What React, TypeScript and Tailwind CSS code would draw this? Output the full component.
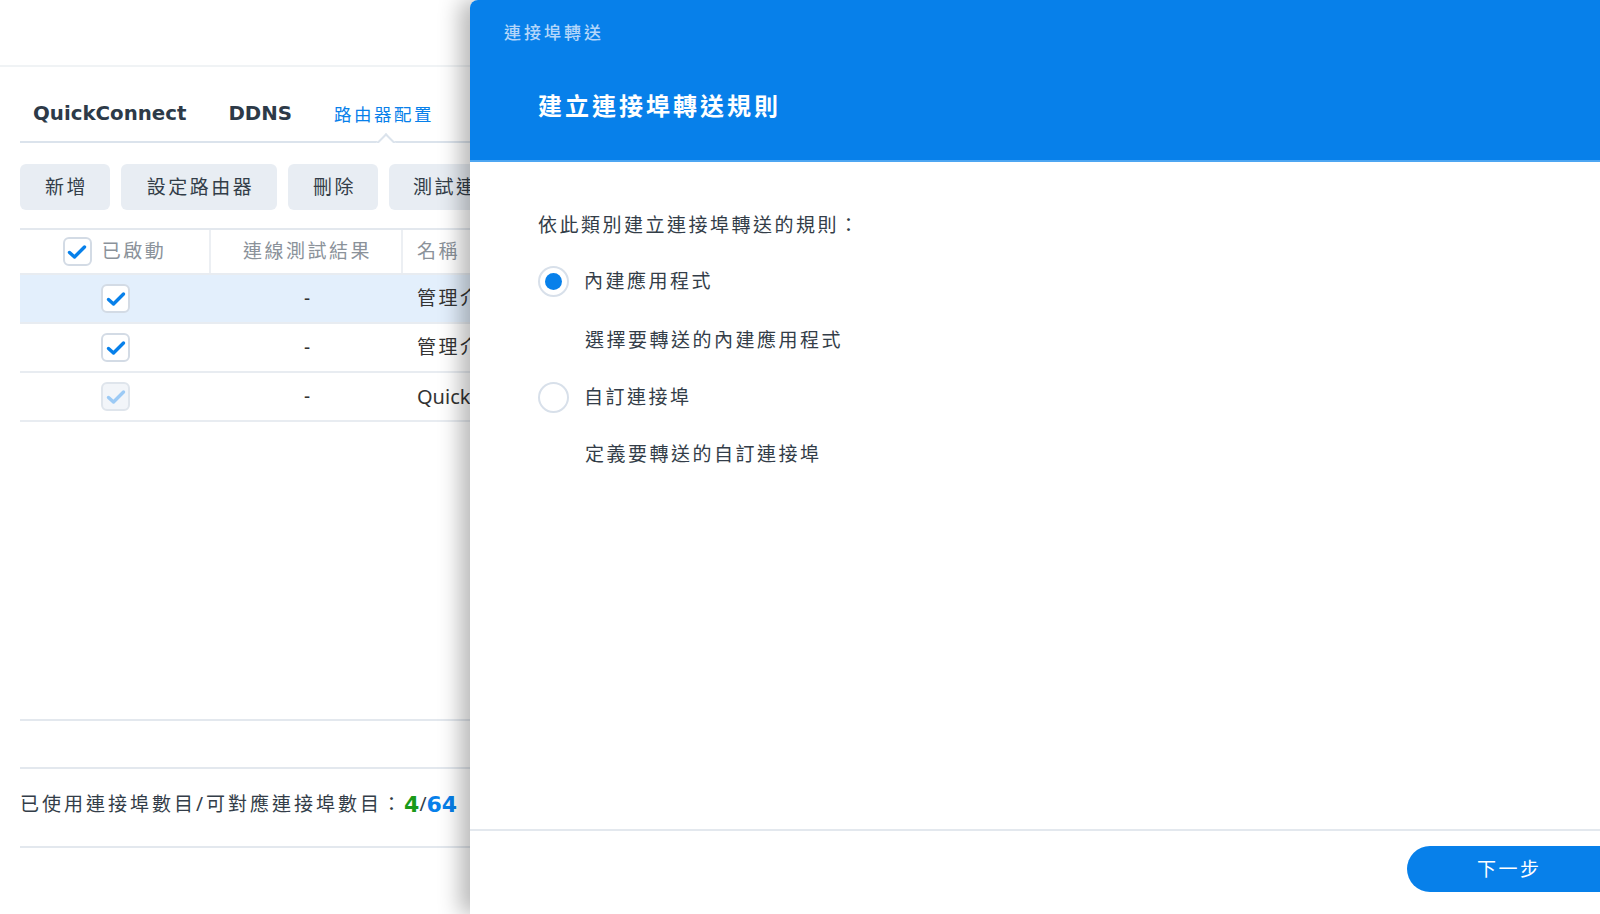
import React from "react";

const font = { fontFamily: '"Noto Sans", "Noto Sans CJK TC", sans-serif' };
const dv = { fontFamily: '"DejaVu Sans", "Noto Sans CJK TC", sans-serif' };

function Check({ faded = false }: { faded?: boolean }) {
  return (
    <div
      className={`flex h-[29px] w-[29px] shrink-0 items-center justify-center rounded-[6px] border-2 ${
        faded ? "border-[#dfe5ec] bg-[#f2f5f9]" : "border-[#d3dbe5] bg-white"
      }`}
    >
      <svg width="20" height="16" viewBox="0 0 20 16" fill="none">
        <path
          d="M2.5 8.5 L7.5 13 L17.5 3"
          stroke={faded ? "#9ccaf5" : "#0780ea"}
          strokeWidth="3.4"
          strokeLinecap="round"
          strokeLinejoin="round"
        />
      </svg>
    </div>
  );
}

function Row({ name, latin = false, faded = false, active = false }: { name: string; latin?: boolean; faded?: boolean; active?: boolean }) {
  return (
    <div className={`flex h-[49px] items-center border-b-2 border-[#e8ecf1] ${active ? "bg-[#e3effc]" : ""}`}>
      <div className="flex w-[191px] shrink-0 justify-center">
        <Check faded={faded} />
      </div>
      <div className="flex w-[192px] shrink-0 justify-center text-[19px] text-[#333]">-</div>
      <div className={`shrink-0 whitespace-nowrap pl-[14px] text-[#333] ${latin ? "text-[20px]" : "text-[19px] tracking-[2.5px]"}`}>{name}</div>
    </div>
  );
}

function Radio({ checked }: { checked: boolean }) {
  return (
    <div className="flex h-[31px] w-[31px] shrink-0 items-center justify-center rounded-full border-2 border-[#d8e0ea] bg-white">
      {checked && <div className="h-[17px] w-[17px] rounded-full bg-[#0780ea]" />}
    </div>
  );
}

export default function App() {
  return (
    <div className="relative h-[914px] w-[1600px] overflow-hidden bg-white" style={font}>
      {/* Left background page */}
      <div className="h-[67px] border-b-2 border-[#f0f3f5]" />
      <div className="w-[470px] pl-[20px]">
        <div className="relative flex h-[76px] items-center gap-[42px] border-b-2 border-[#dbe3ec] pl-[13px] pt-[20px]">
          <span className="text-[19.8px] font-bold text-[#2d3a48]" style={dv}>QuickConnect</span>
          <span className="text-[19.8px] font-bold text-[#2d3a48]" style={dv}>DDNS</span>
          <span className="text-[17.5px] tracking-[2.5px] text-[#0780ea]">路由器配置</span>
          <div className="absolute bottom-[-2px] left-[356px] h-[10px] w-[20px] overflow-hidden">
            <div className="absolute left-[3px] top-[3px] h-[14px] w-[14px] rotate-45 border-l-2 border-t-2 border-[#dbe3ec] bg-white" />
          </div>
        </div>
        <div className="mt-[21px] flex gap-[11px] whitespace-nowrap text-[19px] tracking-[2.5px] text-[#333d48]">
          <div className="flex h-[46px] w-[90px] shrink-0 items-center justify-center rounded-[6px] bg-[#e8edf3] pl-[3px]">新增</div>
          <div className="flex h-[46px] w-[156px] shrink-0 items-center justify-center rounded-[6px] bg-[#e8edf3] pl-[3px]">設定路由器</div>
          <div className="flex h-[46px] w-[90px] shrink-0 items-center justify-center rounded-[6px] bg-[#e8edf3] pl-[3px]">刪除</div>
          <div className="flex h-[46px] w-[130px] shrink-0 items-center rounded-[6px] bg-[#e8edf3] pl-[24px]">測試連線</div>
        </div>
        <div className="mt-[18px] border-t-2 border-[#e3e8ee]">
          <div className="flex h-[45px] items-center border-b-2 border-[#e8ecf1] text-[19px] tracking-[2.5px] text-[#8b929a]">
            <div className="flex h-full w-[191px] shrink-0 items-center justify-center gap-[10px] border-r-2 border-[#eceff3]">
              <Check />
              <span>已啟動</span>
            </div>
            <div className="flex h-full w-[192px] shrink-0 items-center justify-center border-r-2 border-[#eceff3] pl-[3px]">連線測試結果</div>
            <div className="shrink-0 pl-[14px]">名稱</div>
          </div>
          <Row name="管理介面" active />
          <Row name="管理介面" />
          <Row name="QuickConnect" latin faded />
        </div>
        <div className="mt-[297px] h-[48px] border-t-2 border-[#e3e8ee]" />
        <div className="flex h-[81px] items-center whitespace-nowrap border-t-2 border-b-2 border-[#e3e8ee] pb-[6px] text-[19px] tracking-[3px] text-[#333d48]">
          <span>已使用連接埠數目/可對應連接埠數目：</span>
          <span className="text-[22px] font-bold tracking-normal text-[#1a9a1a]" style={dv}>4</span>
          <span className="tracking-normal">/</span>
          <span className="text-[22px] font-bold tracking-normal text-[#0780ea]" style={dv}>64</span>
        </div>
      </div>

      {/* Modal */}
      <div className="absolute left-[470px] top-0 flex h-[914px] w-[1160px] flex-col rounded-tl-[8px] bg-white shadow-[-10px_0_22px_rgba(0,0,0,0.28)]">
        <div className="h-[162px] rounded-tl-[8px] border-b-2 border-[#4ea6f2] bg-[#0780ea]">
          <div className="pl-[34px] pt-[20px] text-[17px] font-medium leading-[25px] tracking-[3px] text-[#b3d6fa]">連接埠轉送</div>
          <div className="pl-[68px] pt-[44px] text-[24px] font-bold leading-[34px] tracking-[3px] text-white">建立連接埠轉送規則</div>
        </div>
        <div className="flex-1 pl-[68px] pt-[50px] text-[19px] leading-[27px] tracking-[2.5px] text-[#333d48]">
          <div>依此類別建立連接埠轉送的規則：</div>
          <div className="mt-[27px] flex items-center gap-[15px]">
            <Radio checked />
            <span>內建應用程式</span>
          </div>
          <div className="mt-[30px] pl-[47px]">選擇要轉送的內建應用程式</div>
          <div className="mt-[28px] flex items-center gap-[15px]">
            <Radio checked={false} />
            <span>自訂連接埠</span>
          </div>
          <div className="mt-[28px] pl-[47px]">定義要轉送的自訂連接埠</div>
        </div>
        <div className="h-[85px] border-t-2 border-[#e3e8ee] pl-[937px] pt-[15px]">
          <div className="flex h-[46px] w-[230px] items-center rounded-full bg-[#0780ea] pl-[70px] text-[19px] tracking-[2.5px] text-white">
            下一步
          </div>
        </div>
      </div>
    </div>
  );
}
